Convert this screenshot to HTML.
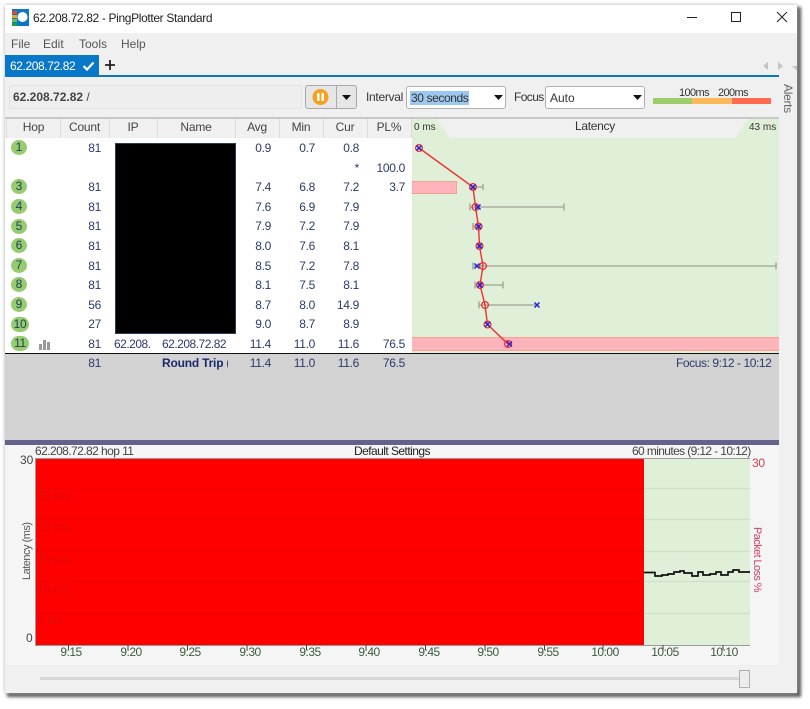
<!DOCTYPE html>
<html><head><meta charset="utf-8"><style>
html,body{margin:0;padding:0;width:810px;height:709px;overflow:hidden;background:#fff}
*{box-sizing:border-box}
body{font-family:"Liberation Sans",sans-serif;font-size:12px;color:#222}
.a{position:absolute}
.t{position:absolute;white-space:nowrap;line-height:14px;height:14px}
.n{position:absolute;white-space:nowrap;line-height:14px;height:14px;color:#2b3a6a;text-align:right;width:50px;letter-spacing:-.3px}
.h{position:absolute;top:120px;line-height:14px;text-align:center;color:#444;letter-spacing:-.2px}
.d{position:absolute;top:119px;height:19px;width:1px;background:#dcdcdc}
.c{position:absolute;left:11px;width:16px;height:15px;border-radius:50%;background:#95cc70;color:#24405a;text-align:center;line-height:14px;font-size:12px}
.x{position:absolute;top:645px;color:#3c5a3c;line-height:14px;width:40px;text-align:center;letter-spacing:-.5px}
.r{position:absolute;left:37px;color:#d80c0c;line-height:14px;opacity:.9}
</style></head><body>
<div class="a" style="left:5px;top:5px;width:792px;height:688px;background:#f0f0f0;box-shadow:0 0 4px #bbb,3px 3px 3px 1px #555"></div>
<div class="a" style="left:5px;top:5px;width:792px;height:28px;background:#fff"></div>
<svg class="a" style="left:12px;top:9px" width="17" height="17"><rect width="17" height="17" fill="#0a78c8"/><rect x="0" y="2" width="5" height="3" fill="#e8452c"/><rect x="0" y="6" width="5" height="3" fill="#f5a623"/><rect x="0" y="10" width="5" height="3" fill="#6cc04a"/><rect x="0" y="14" width="5" height="3" fill="#2a9d3a"/><circle cx="10.5" cy="8" r="5" fill="#fff"/></svg>
<div class="t" style="left:33px;top:11px;font-size:12px;color:#222;letter-spacing:-.35px">62.208.72.82 - PingPlotter Standard</div>
<svg class="a" style="left:680px;top:8px" width="115" height="20" fill="none" stroke="#222"><path d="M7 9.5H17"/><rect x="51.5" y="4.500" width="9" height="9"/><path d="M97 4L107 14M107 4L97 14"/></svg>
<div class="t" style="left:11px;top:37px;color:#555">File</div>
<div class="t" style="left:43px;top:37px;color:#555">Edit</div>
<div class="t" style="left:79px;top:37px;color:#555">Tools</div>
<div class="t" style="left:121px;top:37px;color:#555">Help</div>
<div class="a" style="left:5px;top:55px;width:94px;height:21px;background:#0a78c8"></div>
<div class="t" style="left:10px;top:59px;color:#fff;letter-spacing:-.4px">62.208.72.82</div>
<svg class="a" style="left:82px;top:60px" width="14" height="12" fill="none" stroke="#fff" stroke-width="2.200"><path d="M1.500 6L5 9.500L11.500 2.500"/></svg>
<svg class="a" style="left:104px;top:59px" width="12" height="12" stroke="#222" stroke-width="1.800"><path d="M6 1V11M1 6H11"/></svg>
<svg class="a" style="left:760px;top:60px" width="37" height="12" fill="#c4c4c4"><path d="M8 2V10L3 6Z"/><path d="M18 2V10L23 6Z"/><path d="M32 6H37V11Z"/></svg>
<div class="a" style="left:5px;top:75px;width:774px;height:2px;background:#0a78c8"></div>
<div class="a" style="left:779px;top:75px;width:18px;height:618px;background:#f0f0f0"></div>
<div class="a" style="left:9px;top:85px;width:293px;height:24px;background:#eee;border:1px solid #e2e2e2;border-radius:2px"></div>
<div class="t" style="left:13px;top:90px;font-weight:bold;color:#444">62.208.72.82 <span style="font-weight:normal">/</span></div>
<div class="a" style="left:305px;top:85px;width:52px;height:24px;background:#e6e6e6;border:1px solid #a8a8a8;border-radius:3px"></div>
<div class="a" style="left:336px;top:86px;width:1px;height:22px;background:#aaa"></div>
<svg class="a" style="left:312px;top:89px" width="17" height="17"><circle cx="8.500" cy="8" r="8" fill="#f9a01b"/><rect x="5" y="4" width="2.500" height="8" fill="#fff"/><rect x="9.500" y="4" width="2.500" height="8" fill="#fff"/></svg>
<svg class="a" style="left:342px;top:95px" width="10" height="6"><path d="M0 0H9L4.500 5Z" fill="#111"/></svg>
<div class="t" style="left:366px;top:90px;color:#333;letter-spacing:-.3px">Interval</div>
<div class="a" style="left:406px;top:86px;width:100px;height:23px;background:#fff;border:1px solid #b0b0b0;border-radius:3px"></div>
<div class="a" style="left:410px;top:91px;width:59px;height:14px;background:#9cc8f0"></div>
<div class="t" style="left:411px;top:91px;color:#333;letter-spacing:-.4px">30 seconds</div>
<svg class="a" style="left:494px;top:95px" width="10" height="6"><path d="M0 0H9L4.500 5Z" fill="#111"/></svg>
<div class="t" style="left:514px;top:90px;color:#333;letter-spacing:-.6px">Focus</div>
<div class="a" style="left:545px;top:86px;width:100px;height:23px;background:#fff;border:1px solid #b0b0b0;border-radius:3px"></div>
<div class="t" style="left:550px;top:91px;color:#333">Auto</div>
<svg class="a" style="left:633px;top:95px" width="10" height="6"><path d="M0 0H9L4.500 5Z" fill="#111"/></svg>
<div class="t" style="left:679px;top:86px;font-size:11px;color:#333;letter-spacing:-.6px">100ms</div>
<div class="t" style="left:718px;top:86px;font-size:11px;color:#333;letter-spacing:-.6px">200ms</div>
<div class="a" style="left:653px;top:98px;width:39px;height:6px;background:#9ccc6c"></div>
<div class="a" style="left:692px;top:98px;width:40px;height:6px;background:#fdb85a"></div>
<div class="a" style="left:732px;top:98px;width:39px;height:6px;background:#ff6b50"></div>
<div class="t" style="left:781px;top:84px;color:#666;letter-spacing:-.3px;transform-origin:0 0;transform:translate(14px,0) rotate(90deg)">Alerts</div>

<!-- table -->
<div class="a" style="left:5px;top:117px;width:774px;height:2px;background:#c8c8c8"></div>
<div class="a" style="left:5px;top:119px;width:774px;height:19px;background:#f0f0f0"></div>
<div class="a" style="left:5px;top:138px;width:407px;height:215px;background:#fff"></div>
<div class="d" style="left:60px"></div><div class="d" style="left:109px"></div><div class="d" style="left:157px"></div><div class="d" style="left:235px"></div><div class="d" style="left:279px"></div><div class="d" style="left:323px"></div><div class="d" style="left:367px"></div><div class="d" style="left:411px"></div><div class="d" style="left:6px"></div>
<div class="h" style="left:7px;width:53px">Hop</div>
<div class="h" style="left:60px;width:49px">Count</div>
<div class="h" style="left:109px;width:48px">IP</div>
<div class="h" style="left:157px;width:78px">Name</div>
<div class="h" style="left:235px;width:44px">Avg</div>
<div class="h" style="left:279px;width:44px">Min</div>
<div class="h" style="left:323px;width:44px">Cur</div>
<div class="h" style="left:367px;width:44px">PL%</div>

<!-- latency chart -->
<svg class="a" style="left:412px;top:119px" width="367" height="234">
<rect width="367" height="234" fill="#e0efd8"/>
<path d="M25 0H336L323 19H38Z" fill="#f0f0f0"/>
<rect x="0" y="62.500" width="44.500" height="12" fill="#ffb3ba" stroke="#f8a090"/>
<rect x="-2" y="218.500" width="370" height="13" fill="#ffb3ba" stroke="#f8a090"/>
<g stroke="#a8aea0" stroke-width="1.600" fill="none">
<path d="M58 68H71M71 65V71M58 65V71"/>
<path d="M58 88H152M152 84.500V91.500M58 84.500V91.500"/>
<path d="M61 107.500H71M61 104V111"/>
<path d="M65 127H71"/>
<path d="M61 147H364M364 143.500V150.500M61 143.500V150.500"/>
<path d="M63 166H91M91 162.500V169.500M63 162.500V169.500"/>
<path d="M67 186H125M67 182.500V189.500"/>
</g>
<polyline points="7,29 61,68 63.500,88 66.500,107.500 67.500,127 71,147 68,166 73,186 75.500,205.500 96,225" fill="none" stroke="#f03030" stroke-width="1.400"/>
<g fill="none" stroke="#f03030" stroke-width="1.300">
<circle cx="7" cy="29" r="3.400"/><circle cx="61" cy="68" r="3.400"/><circle cx="63.500" cy="88" r="3.400"/><circle cx="66.500" cy="107.500" r="3.400"/><circle cx="67.500" cy="127" r="3.400"/><circle cx="71" cy="147" r="3.400"/><circle cx="68" cy="166" r="3.400"/><circle cx="73" cy="186" r="3.400"/><circle cx="75.500" cy="205.500" r="3.400"/><circle cx="96" cy="225" r="3.400"/>
</g>
<path d="M4.500 26.500l5 5m0-5l-5 5M58.500 65.500l5 5m0-5l-5 5M63.500 85.500l5 5m0-5l-5 5M64 105l5 5m0-5l-5 5M65 124.500l5 5m0-5l-5 5M62.500 144.500l5 5m0-5l-5 5M65.500 163.500l5 5m0-5l-5 5M122.500 183.500l5 5m0-5l-5 5M73 203l5 5m0-5l-5 5M95 222.500l5 5m0-5l-5 5" stroke="#2020e0" stroke-width="1.500" fill="none"/>
</svg>
<div class="t" style="left:414px;top:121px;font-size:10px;color:#333">0 ms</div>
<div class="t" style="left:749px;top:121px;font-size:10px;color:#333">43 ms</div>
<div class="t" style="left:575px;top:119px;color:#333;letter-spacing:-.3px">Latency</div>

<!-- rows -->
<div class="c" style="top:140px">1</div>
<div class="c" style="top:179px">3</div>
<div class="c" style="top:199px">4</div>
<div class="c" style="top:219px">5</div>
<div class="c" style="top:238px">6</div>
<div class="c" style="top:258px">7</div>
<div class="c" style="top:277px">8</div>
<div class="c" style="top:297px">9</div>
<div class="c" style="top:317px;width:18px;border-radius:8px;letter-spacing:-.3px">10</div>
<div class="c" style="top:336px;width:18px;border-radius:8px;letter-spacing:-.3px">11</div>
<svg class="a" style="left:39px;top:340px" width="12" height="10" fill="#999"><rect x="0" y="4" width="3" height="6"/><rect x="4" y="0" width="3" height="10"/><rect x="8" y="2" width="3" height="8"/></svg>

<div class="n" style="left:51px;top:141px">81</div><div class="n" style="left:221px;top:141px">0.9</div><div class="n" style="left:265px;top:141px">0.7</div><div class="n" style="left:309px;top:141px">0.8</div>
<div class="n" style="left:309px;top:161px">*</div><div class="n" style="left:355px;top:161px">100.0</div>
<div class="n" style="left:51px;top:180px">81</div><div class="n" style="left:221px;top:180px">7.4</div><div class="n" style="left:265px;top:180px">6.8</div><div class="n" style="left:309px;top:180px">7.2</div><div class="n" style="left:355px;top:180px">3.7</div>
<div class="n" style="left:51px;top:200px">81</div><div class="n" style="left:221px;top:200px">7.6</div><div class="n" style="left:265px;top:200px">6.9</div><div class="n" style="left:309px;top:200px">7.9</div>
<div class="n" style="left:51px;top:219px">81</div><div class="n" style="left:221px;top:219px">7.9</div><div class="n" style="left:265px;top:219px">7.2</div><div class="n" style="left:309px;top:219px">7.9</div>
<div class="n" style="left:51px;top:239px">81</div><div class="n" style="left:221px;top:239px">8.0</div><div class="n" style="left:265px;top:239px">7.6</div><div class="n" style="left:309px;top:239px">8.1</div>
<div class="n" style="left:51px;top:259px">81</div><div class="n" style="left:221px;top:259px">8.5</div><div class="n" style="left:265px;top:259px">7.2</div><div class="n" style="left:309px;top:259px">7.8</div>
<div class="n" style="left:51px;top:278px">81</div><div class="n" style="left:221px;top:278px">8.1</div><div class="n" style="left:265px;top:278px">7.5</div><div class="n" style="left:309px;top:278px">8.1</div>
<div class="n" style="left:51px;top:298px">56</div><div class="n" style="left:221px;top:298px">8.7</div><div class="n" style="left:265px;top:298px">8.0</div><div class="n" style="left:309px;top:298px">14.9</div>
<div class="n" style="left:51px;top:317px">27</div><div class="n" style="left:221px;top:317px">9.0</div><div class="n" style="left:265px;top:317px">8.7</div><div class="n" style="left:309px;top:317px">8.9</div>
<div class="n" style="left:51px;top:337px">81</div><div class="n" style="left:221px;top:337px">11.4</div><div class="n" style="left:265px;top:337px">11.0</div><div class="n" style="left:309px;top:337px">11.6</div><div class="n" style="left:355px;top:337px">76.5</div>
<div class="t" style="left:114px;top:337px;color:#2b3a6a;width:38px;overflow:hidden;letter-spacing:-.5px">62.208.</div>
<div class="t" style="left:162px;top:337px;color:#2b3a6a;letter-spacing:-.5px">62.208.72.82</div>
<div class="a" style="left:115px;top:143px;width:121px;height:191px;background:#000;border:1px solid #2a3a60"></div>

<div class="a" style="left:5px;top:353px;width:774px;height:1px;background:#111"></div>
<div class="a" style="left:5px;top:354px;width:774px;height:86px;background:#d2d2d2"></div>
<div class="n" style="left:51px;top:356px">81</div>
<div class="t" style="left:162px;top:356px;width:66px;overflow:hidden;font-weight:bold;color:#1a2a6a;letter-spacing:-.2px">Round Trip (ms)</div>
<div class="n" style="left:221px;top:356px">11.4</div><div class="n" style="left:265px;top:356px">11.0</div><div class="n" style="left:309px;top:356px">11.6</div><div class="n" style="left:355px;top:356px">76.5</div>
<div class="t" style="left:676px;top:356px;color:#2b3a6a;letter-spacing:-.42px">Focus: 9:12 - 10:12</div>
<div class="a" style="left:5px;top:440px;width:774px;height:5px;background:#62628c"></div>

<!-- bottom -->
<div class="a" style="left:5px;top:445px;width:774px;height:220px;background:#f5f5f5"></div>
<div class="t" style="left:35px;top:444px;color:#444;letter-spacing:-.57px">62.208.72.82 hop 11</div>
<div class="t" style="left:354px;top:444px;color:#222;letter-spacing:-.55px">Default Settings</div>
<div class="t" style="left:632px;top:444px;color:#444;letter-spacing:-.62px">60 minutes (9:12 - 10:12)</div>
<svg class="a" style="left:35px;top:458px" width="715" height="194">
<rect width="715" height="188" fill="#e0efd8"/>
<path d="M0 30.500H715M0 61.500H715M0 93.500H715M0 123.500H715M0 155.500H715" stroke="#cfe0c6" stroke-width="1.300"/>
<rect width="609" height="187" fill="#ff0000"/>
<path d="M0 30.500H609M0 61.500H609M0 93.500H609M0 123.500H609M0 155.500H609" stroke="#e80000"/>
<path d="M0 .5H715M.5 0V188M0 187.500H715" stroke="#999" fill="none"/>
<path d="M33.500 187V192M93 187V192M152.500 187V192M212 187V192M271.500 187V192M331 187V192M390.500 187V192M450 187V192M509.500 187V192M568 187V192M628 187V192M688 187V192" stroke="#444" stroke-width="1"/>
<path d="M609 114.500H620V118H627V117H633V116H639V114H645V113H649V115H657V118H663V114H668V117H675V116H681V114H686V117H693V114H698V112H704V114H715" fill="none" stroke="#111" stroke-width="1.700"/>
</svg>
<div class="r" style="top:489px">25 ms</div><div class="r" style="top:520px">20 ms</div><div class="r" style="top:552px">15 ms</div><div class="r" style="top:582px">10 ms</div><div class="r" style="top:613px">5 ms</div>
<div class="t" style="left:20px;top:453px;color:#444">30</div>
<div class="t" style="left:26px;top:631px;color:#444">0</div>
<div class="t" style="left:752px;top:456px;color:#d04050;letter-spacing:-.3px">30</div>
<div class="t" style="left:20px;top:580px;color:#555;font-size:11px;letter-spacing:-.5px;transform-origin:0 0;transform:rotate(-90deg)">Latency (ms)</div>
<div class="t" style="left:764px;top:527px;color:#d04060;font-size:11px;letter-spacing:-.6px;transform-origin:0 0;transform:rotate(90deg)">Packet Loss %</div>
<div class="x" style="left:51px">9:15</div><div class="x" style="left:111px">9:20</div><div class="x" style="left:170px">9:25</div><div class="x" style="left:230px">9:30</div><div class="x" style="left:290px">9:35</div><div class="x" style="left:349px">9:40</div><div class="x" style="left:409px">9:45</div><div class="x" style="left:468px">9:50</div><div class="x" style="left:528px">9:55</div><div class="x" style="left:585px">10:00</div><div class="x" style="left:645px">10:05</div><div class="x" style="left:704px">10:10</div>
<div class="a" style="left:5px;top:665px;width:774px;height:28px;background:#f0f0f0"></div>
<div class="a" style="left:40px;top:677px;width:700px;height:3px;background:#dedede;border:1px solid #d4d4d4"></div>
<div class="a" style="left:739px;top:670px;width:11px;height:18px;background:#ececec;border:1px solid #b0b0b0"></div>
</body></html>
